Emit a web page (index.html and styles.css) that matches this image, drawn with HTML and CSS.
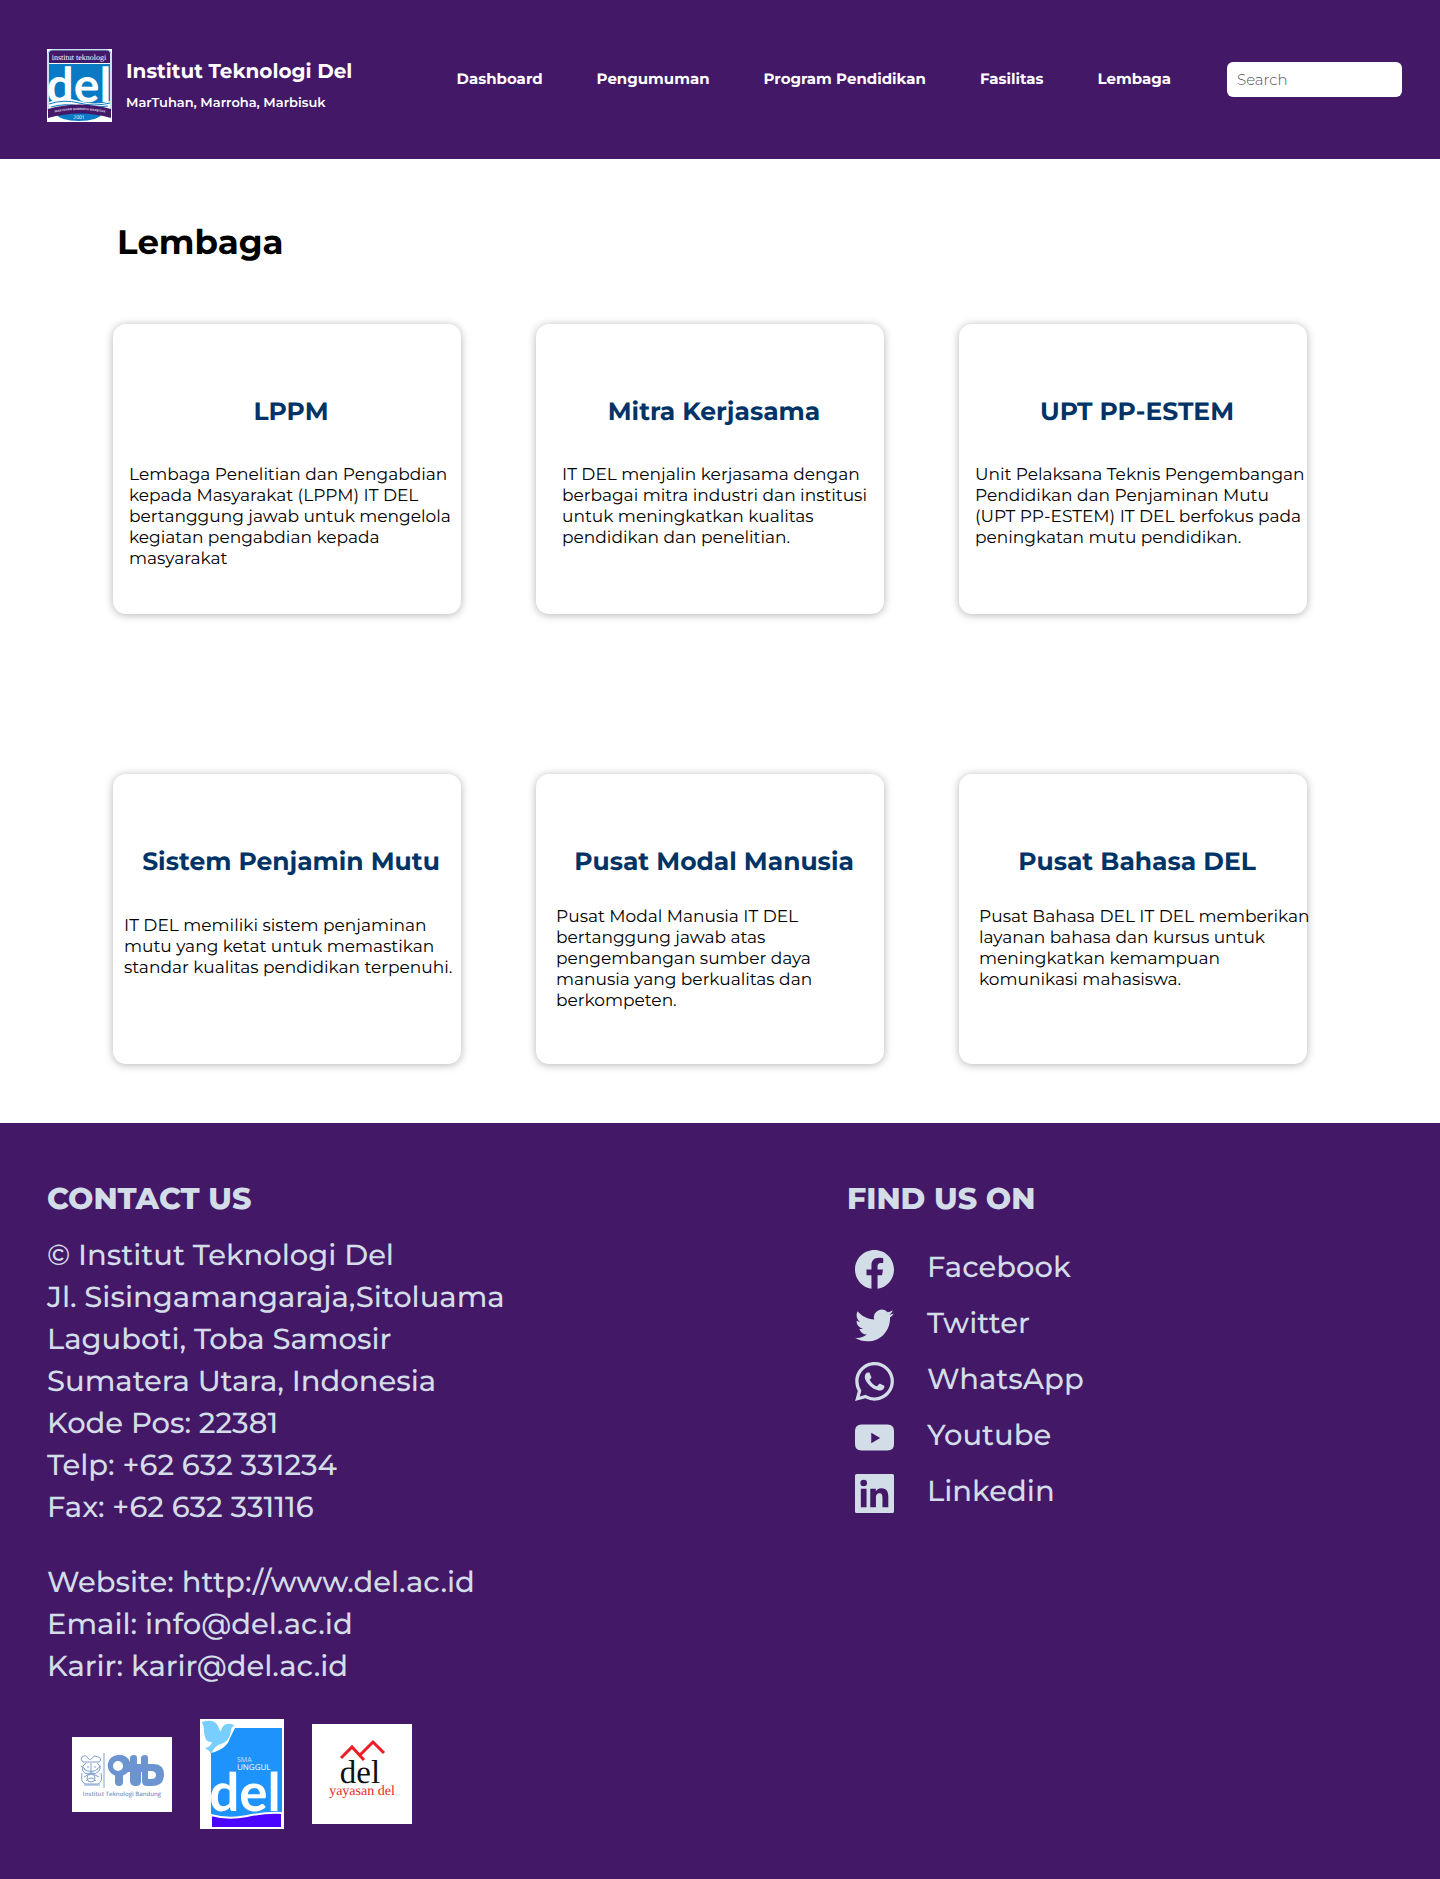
FILE: index.html
```html
<!DOCTYPE html>
<html lang="id">
<head>
<meta charset="utf-8">
<meta name="viewport" content="width=device-width, initial-scale=1">
<title>Lembaga - Institut Teknologi Del</title>
<link rel="stylesheet" href="styles.css">
</head>
<body>
<header class="site-header">
  <a class="brand" href="#">
    <svg class="brand-logo" viewBox="0 0 65 73" aria-hidden="true">
      <rect width="65" height="73" fill="#fff"/>
      <path d="M2 14V5q0-4 4-4h53q4 0 4 4v9z" fill="#431867"/>
      <path d="M2 15h61v44H2z" fill="#0a7ac4"/>
      <path d="M1 62V5q0-4 4-4h55q4 0 4 4v57" fill="none" stroke="#8fc3e4"/>
      <text x="32" y="11" class="logo-serif" font-size="8" text-anchor="middle" fill="#fff">institut teknologi</text>
      <text x="32" y="53" class="logo-round" font-size="48" text-anchor="middle" fill="#fff">del</text>
      <path d="M2 53q14-6 30-1t31 0v10H2z" fill="#fff"/>
      <path d="M2 55q15-5 30-1t31 0M4 58q14-4 28-1t29 0" fill="none" stroke="#0a7ac4"/>
      <ellipse cx="32" cy="65" rx="22" ry="7" fill="#0a7ac4"/>
      <path d="M1 60q31-9 63 0v9q-31-9-63 0z" fill="#431867"/>
      <path id="motto" d="M6 64q26-6 54 0" fill="none"/>
      <text class="logo-sans" font-size="3" font-weight="700" fill="#d8cce4"><textPath href="#motto" startOffset="50%" text-anchor="middle">MARTUHAN MARROHA MARBISUK</textPath></text>
      <text x="32" y="70" class="logo-sans" font-size="5" text-anchor="middle" fill="#fff">2001</text>
    </svg>
    <span class="brand-text">
      <span class="brand-name">Institut Teknologi Del</span>
      <span class="brand-motto">MarTuhan, Marroha, Marbisuk</span>
    </span>
  </a>
  <nav class="main-nav" aria-label="Utama">
    <a href="#">Dashboard</a>
    <a href="#">Pengumuman</a>
    <a href="#">Program Pendidikan</a>
    <a href="#">Fasilitas</a>
    <a href="#">Lembaga</a>
  </nav>
  <input class="search" type="search" placeholder="Search" aria-label="Search">
</header>

<main class="content">
  <h1>Lembaga</h1>
  <div class="cards">
    <article class="card">
      <h2>LPPM</h2>
      <p>Lembaga Penelitian dan Pengabdian<br>kepada Masyarakat (LPPM) IT DEL<br>bertanggung jawab untuk mengelola<br>kegiatan pengabdian kepada<br>masyarakat</p>
    </article>
    <article class="card inset">
      <h2>Mitra Kerjasama</h2>
      <p>IT DEL menjalin kerjasama dengan<br>berbagai mitra industri dan institusi<br>untuk meningkatkan kualitas<br>pendidikan dan penelitian.</p>
    </article>
    <article class="card">
      <h2>UPT PP-ESTEM</h2>
      <p>Unit Pelaksana Teknis Pengembangan<br>Pendidikan dan Penjaminan Mutu<br>(UPT PP-ESTEM) IT DEL berfokus pada<br>peningkatan mutu pendidikan.</p>
    </article>
    <article class="card wide">
      <h2>Sistem Penjamin Mutu</h2>
      <p>IT DEL memiliki sistem penjaminan<br>mutu yang ketat untuk memastikan<br>standar kualitas pendidikan terpenuhi.</p>
    </article>
    <article class="card compact">
      <h2>Pusat Modal Manusia</h2>
      <p>Pusat Modal Manusia IT DEL<br>bertanggung jawab atas<br>pengembangan sumber daya<br>manusia yang berkualitas dan<br>berkompeten.</p>
    </article>
    <article class="card compact">
      <h2>Pusat Bahasa DEL</h2>
      <p>Pusat Bahasa DEL IT DEL memberikan<br>layanan bahasa dan kursus untuk<br>meningkatkan kemampuan<br>komunikasi mahasiswa.</p>
    </article>
  </div>
</main>

<footer class="site-footer">
  <section class="contact">
    <h2>CONTACT US</h2>
    <address>
      <p>© Institut Teknologi Del<br>Jl. Sisingamangaraja,Sitoluama<br>Laguboti, Toba Samosir<br>Sumatera Utara, Indonesia<br>Kode Pos: 22381<br>Telp: +62 632 331234<br>Fax: +62 632 331116</p>
      <p>Website: <a href="#">http://www.del.ac.id</a><br>Email: <a href="#">info@del.ac.id</a><br>Karir: <a href="#">karir@del.ac.id</a></p>
    </address>
    <div class="partners">
      <svg width="100" height="75" viewBox="0 0 100 75" role="img" aria-label="Institut Teknologi Bandung">
        <rect width="100" height="75" fill="#fff"/>
        <g fill="none" stroke="#7fa0d3" stroke-width="1">
          <path d="M10 20q4-3 6 1t6-2q4 0 6 2t-1 4h-16q-3-2-1-5zM14 26q-5 4-3 8t8 2q5 2 8-2t-2-8M10 36q-2 10 4 11h12q5-2 3-11M12 40l7-4 8 4M14 44q5-6 10 0M19 26v10M15 30h2m5 0h2M12 32q7 5 14 0M9 29l4 3M29 29l-4 3M12 48h16"/>
          <circle cx="19" cy="41" r="4"/>
          <path d="M32 16v35"/>
        </g>
        <g fill="#6b94d0" fill-rule="evenodd">
          <path d="M46 18a10.500 10.500 0 0 0-3 20.500V45q0 4 4 4t4-4v-6.500a10.500 10.500 0 0 0 5-3.500h2v9q0 5 6 5 5 0 5-5v-9h1v9q0 5 5 5h5q12 0 12-11.500T80 27h-4v-6q0-3-3-3-4 0-4 3v6h-4v-6q0-3-3-3-4 0-4 3v4a11 11 0 0 0-12-7zm0 6a5 5 0 1 1 0 10 5 5 0 0 1 0-10zM76 34v8h3q5 0 5-4t-5-4z"/>
        </g>
        <text x="50" y="59" class="logo-sans" font-size="6" font-weight="600" text-anchor="middle" fill="#7897c8">Institut Teknologi Bandung</text>
      </svg>
      <svg width="84" height="110" viewBox="0 0 84 110" role="img" aria-label="SMA Unggul Del">
        <rect width="84" height="110" fill="#fff"/>
        <path d="M35 9h47v90H11V34q16-4 19-15z" fill="#1e93fb"/>
        <text x="37" y="43" class="logo-sans" font-size="7" fill="#c9e6ff">SMA</text>
        <text x="37" y="51" class="logo-sans" font-size="8" fill="#fff">UNGGUL</text>
        <text x="45" y="92" class="logo-round" font-size="53" text-anchor="middle" fill="#fff">del</text>
        <path d="M11 96q17 5 36 1t35-3v15H11z" fill="#4a04ff" stroke="#fff" stroke-width="2"/>
        <path d="M2 3q12-4 16 4 2 6 3 5 1-6 6-7 4-1 8 2-4 0-4 5-2 11-10 13-6 1-10 10-2-4-6-6 6-1 7-6-7 1-8-10 0-6-2-10z" fill="#78ceff"/>
      </svg>
      <svg width="100" height="100" viewBox="0 0 100 100" role="img" aria-label="Yayasan Del">
        <rect width="100" height="100" fill="#fff"/>
        <path d="M29 34l11-11 12 13M48 31l13-13 11 11" fill="none" stroke="#ed1c24" stroke-width="3"/>
        <text x="48" y="59" class="logo-serif" font-size="33" text-anchor="middle" fill="#111">del</text>
        <text x="50" y="71" class="logo-serif" font-size="14" text-anchor="middle" fill="#ed1c24">yayasan del</text>
      </svg>
    </div>
  </section>
  <section class="social">
    <h2>FIND US ON</h2>
    <ul>
      <li><a href="#">
        <svg viewBox="0 0 24 24" aria-hidden="true"><path d="M24 12.070C24 5.440 18.630.070 12 .070S0 5.440 0 12.070c0 5.990 4.390 10.950 10.130 11.850v-8.380H7.080v-3.470h3.050V9.430c0-3.010 1.790-4.670 4.530-4.670 1.310 0 2.690.23 2.690.23v2.950h-1.520c-1.490 0-1.950.93-1.950 1.880v2.250h3.320l-.53 3.470h-2.790v8.380C19.610 23.020 24 18.060 24 12.070z"/></svg>
        <span>Facebook</span></a></li>
      <li><a href="#">
        <svg viewBox="0 0 24 24" aria-hidden="true"><path d="M23.950 4.570a10 10 0 0 1-2.820.78 4.960 4.960 0 0 0 2.160-2.730c-.95.56-2 .96-3.130 1.190a4.920 4.920 0 0 0-8.380 4.480C7.690 8.100 4.070 6.130 1.640 3.160a4.820 4.820 0 0 0-.67 2.480c0 1.710.87 3.210 2.190 4.100a4.900 4.900 0 0 1-2.230-.62v.06a4.920 4.920 0 0 0 3.950 4.830 5 5 0 0 1-2.210.08 4.940 4.940 0 0 0 4.600 3.420A9.870 9.870 0 0 1 0 19.540a14 14 0 0 0 7.550 2.210c9.050 0 14-7.500 14-13.980 0-.21 0-.42-.02-.63a9.940 9.940 0 0 0 2.420-2.570z"/></svg>
        <span>Twitter</span></a></li>
      <li><a href="#">
        <svg viewBox="0 0 24 24" aria-hidden="true"><path d="M17.470 14.380c-.3-.15-1.760-.87-2.030-.97-.27-.1-.47-.15-.67.150-.2.300-.77.970-.94 1.160-.17.200-.35.220-.64.080-.3-.15-1.260-.46-2.390-1.480-.88-.79-1.480-1.760-1.650-2.060-.17-.3-.02-.46.130-.61.130-.13.300-.35.450-.52.150-.17.200-.3.300-.5.100-.2.050-.37-.03-.52-.07-.15-.67-1.610-.92-2.210-.24-.58-.49-.5-.67-.51h-.57c-.2 0-.52.070-.79.370-.27.300-1.040 1.020-1.040 2.480s1.070 2.880 1.210 3.070c.150.200 2.100 3.200 5.080 4.490.71.310 1.260.49 1.690.63.710.23 1.360.19 1.870.12.570-.09 1.760-.72 2.010-1.410.25-.69.250-1.290.170-1.410-.07-.12-.27-.2-.57-.35zM12.050 21.790a9.870 9.870 0 0 1-5.030-1.380l-.36-.21-3.740.98 1-3.650-.24-.37a9.860 9.860 0 0 1-1.510-5.260c0-5.450 4.440-9.880 9.890-9.880a9.820 9.820 0 0 1 9.880 9.890c0 5.450-4.430 9.880-9.890 9.880zM20.460 3.490A11.820 11.820 0 0 0 12.050 0C5.500 0 .160 5.340.160 11.890c0 2.100.550 4.140 1.590 5.950L.060 24l6.300-1.650a11.880 11.880 0 0 0 5.690 1.450c6.550 0 11.890-5.340 11.890-11.900a11.820 11.820 0 0 0-3.480-8.410z"/></svg>
        <span>WhatsApp</span></a></li>
      <li><a href="#">
        <svg viewBox="0 0 24 24" aria-hidden="true"><path fill-rule="evenodd" d="M4 4h16q4 0 4 4v8q0 4-4 4H4q-4 0-4-4V8q0-4 4-4zm6 5v6.500l5.500-3.250z"/></svg>
        <span>Youtube</span></a></li>
      <li><a href="#">
        <svg viewBox="0 0 24 24" aria-hidden="true"><path fill-rule="evenodd" d="M1 0h22q1 0 1 1v22q0 1-1 1H1q-1 0-1-1V1q0-1 1-1zm2.600 9v11.500h3.500V9zM5.350 3.500a2 2 0 1 0 0 4.100 2 2 0 0 0 0-4.100zM9.400 9v11.500h3.500v-5.700c0-1.500.3-3 2.150-3s1.850 1.700 1.850 3.100v5.600h3.600v-6.300c0-3.100-.7-5.500-4.300-5.500-1.700 0-2.900 1-3.400 1.850V9z"/></svg>
        <span>Linkedin</span></a></li>
    </ul>
  </section>
</footer>
</body>
</html>
```
FILE: styles.css
```css
* { box-sizing: border-box; }

body {
  margin: 0;
  background: #fff;
  color: #000;
  font-family: Montserrat, Inter, sans-serif;
  text-rendering: geometricPrecision;
}

a { color: inherit; text-decoration: none; }
h1, h2, p, ul { margin: 0; padding: 0; }

.logo-sans { font-family: "Open Sans", sans-serif; }
.logo-round { font-family: Lato, sans-serif; font-weight: 700; }
.logo-serif { font-family: "Liberation Serif", serif; font-weight: 400; }

/* Header */
.site-header {
  display: flex;
  align-items: flex-start;
  padding: 49px 38px 37px 47px;
  background: #431867;
  color: #fff;
}

.brand { display: flex; gap: 14px; }
.brand-logo { width: 65px; height: 73px; }
.brand-text { display: flex; flex-direction: column; gap: 9px; padding-top: 11px; }
.brand-name { font-size: 20px; line-height: 24px; font-weight: 700; }
.brand-motto { font-size: 13px; line-height: 20px; font-weight: 600; }

.main-nav {
  display: flex;
  gap: 54px;
  padding-top: 20px;
  margin: 0 56px 0 auto;
  font-size: 15px;
  line-height: 20px;
  font-weight: 700;
}

.search {
  width: 175px;
  height: 35px;
  margin-top: 13px;
  padding: 0 10px;
  border: 0;
  border-radius: 6px;
  background: #fff;
  font: 300 15px/20px Montserrat, Inter, sans-serif;
}
.search::placeholder { color: #555; opacity: 1; }

/* Cards */
.content { padding: 61px 133px 59px 113px; }

h1 { padding-left: 4px; font-size: 34px; line-height: 44px; font-weight: 700; }

.cards {
  display: grid;
  grid-template-columns: repeat(3, minmax(0, 1fr));
  gap: 160px 75px;
  margin-top: 60px;
}

.card {
  min-height: 290px;
  padding: 72px 0 40px 16px;
  border-radius: 13px;
  background: #fff;
  box-shadow: 0 1px 8px rgba(0, 0, 0, 0.3);
}
.card h2 {
  margin: 0 0 37px -8px;
  color: #003366;
  font-size: 25px;
  line-height: 32px;
  font-weight: 700;
  text-align: center;
}
.card p { font-size: 17px; line-height: 21px; white-space: nowrap; }
.card.inset { padding-left: 26px; }
.card.inset h2 { margin-left: -18px; }
.card.wide { padding-left: 11px; }
.card.wide h2 { margin-left: -3px; margin-bottom: 38px; }
.card.compact { padding-left: 20px; }
.card.compact h2 { margin-left: -12px; margin-bottom: 29px; }

/* Footer */
.site-footer {
  display: grid;
  grid-template-columns: 800px 1fr;
  padding: 55px 47px 50px;
  background: #431867;
  color: #d3dde7;
  font-size: 29px;
  line-height: 42px;
  font-weight: 500;
}
.site-footer h2 { font-size: 30px; line-height: 42px; font-weight: 800; }

address { margin-top: 15px; font-style: normal; }
address p + p { margin-top: 33px; }

.partners { display: flex; align-items: center; gap: 28px; margin: 31px 0 0 25px; }
.partners svg { display: block; }

.social ul { margin-top: 20px; list-style: none; }
.social li a { display: flex; align-items: center; gap: 33px; padding-left: 8px; height: 56px; }
.social svg { width: 39px; height: 39px; margin-top: 3px; fill: currentColor; }
```
